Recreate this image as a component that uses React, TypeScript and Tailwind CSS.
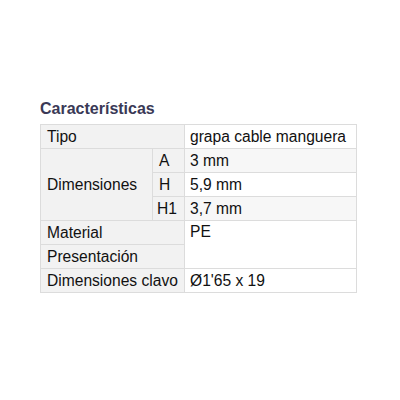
const cell = 'border border-[#dcdcdc] h-[24px] py-0 align-middle';

export default function App() {
  return (
    <div className="w-[400px] h-[400px] bg-white pt-[99px] pl-[40px]" style={{ fontFamily: '"Liberation Sans", Arial, sans-serif' }}>
      <h2 className="text-[16px] leading-[20px] font-bold text-[#3a3956] mb-[5px]">Características</h2>
      <table className="border-collapse w-[317px] text-[15.6px] leading-[18px] text-[#111]">
        <colgroup>
          <col className="w-[112px]" />
          <col className="w-[32px]" />
          <col />
        </colgroup>
        <tbody>
          <tr>
            <td colSpan={2} className={`${cell} bg-[#f2f2f2] pl-[6px]`}>Tipo</td>
            <td className={`${cell} bg-white pl-[5px]`}>grapa cable manguera</td>
          </tr>
          <tr>
            <td rowSpan={3} className={`${cell} bg-[#f2f2f2] pl-[6px]`}>Dimensiones</td>
            <td className={`${cell} bg-[#f2f2f2] pl-[6px]`}>A</td>
            <td className={`${cell} bg-[#f7f7f7] pl-[5px]`}>3 mm</td>
          </tr>
          <tr>
            <td className={`${cell} bg-[#f2f2f2] pl-[6px]`}>H</td>
            <td className={`${cell} bg-white pl-[5px]`}>5,9 mm</td>
          </tr>
          <tr>
            <td className={`${cell} bg-[#f2f2f2] pl-[4px]`}>H1</td>
            <td className={`${cell} bg-[#f7f7f7] pl-[5px]`}>3,7 mm</td>
          </tr>
          <tr>
            <td colSpan={2} className={`${cell} bg-[#f2f2f2] pl-[6px]`}>Material</td>
            <td rowSpan={2} className={`${cell} bg-white pl-[5px] align-top pt-[2px]`}>PE</td>
          </tr>
          <tr>
            <td colSpan={2} className={`${cell} bg-[#f2f2f2] pl-[6px]`}>Presentación</td>
          </tr>
          <tr>
            <td colSpan={2} className={`${cell} bg-[#f2f2f2] pl-[6px]`}>Dimensiones clavo</td>
            <td className={`${cell} bg-white pl-[5px]`}>Ø1'65 x 19</td>
          </tr>
        </tbody>
      </table>
    </div>
  );
}
